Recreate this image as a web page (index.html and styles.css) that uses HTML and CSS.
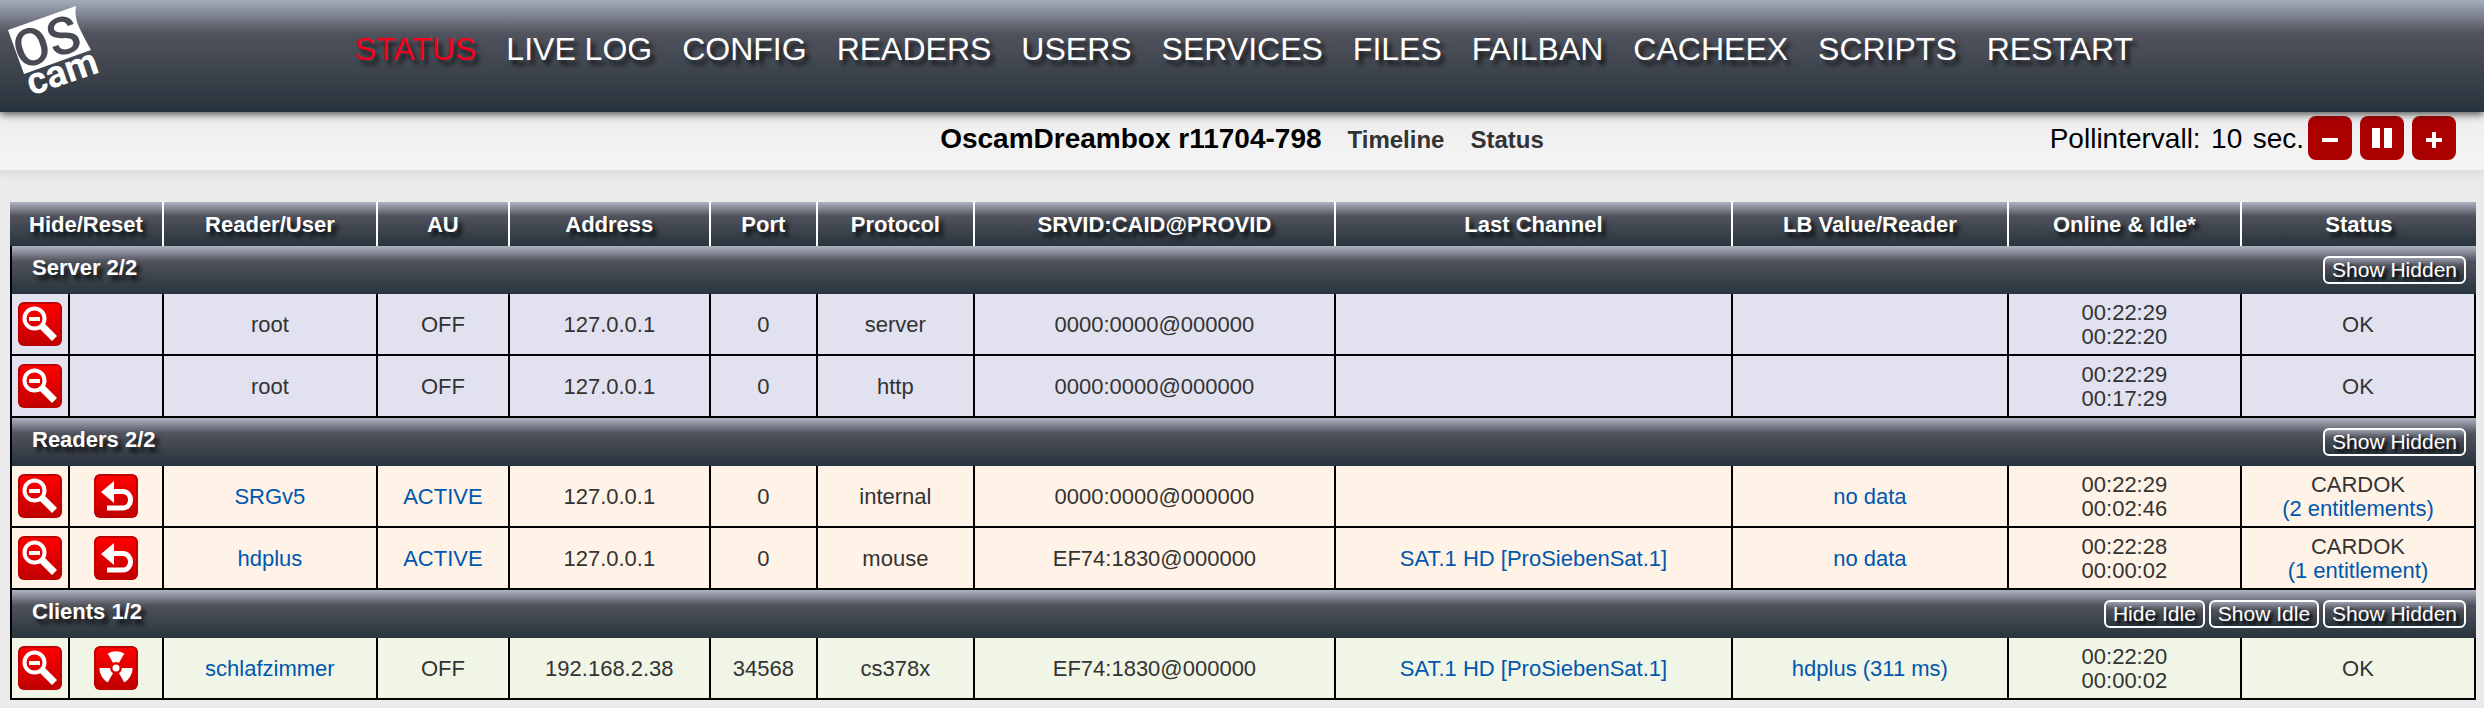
FILE: index.html
```html
<!DOCTYPE html>
<html lang="en">
<head>
  <meta charset="UTF-8" />
  <title>OSCam - Status</title>
  <link rel="stylesheet" href="styles.css">
</head>

<body>
  <!-- shared icons -->
  <svg class="defs" width="0" height="0" aria-hidden="true">
    <defs>
      <linearGradient id="red" x1="0" y1="0" x2="0" y2="1">
        <stop offset="0" stop-color="#ff0000" />
        <stop offset="1" stop-color="#c00000" />
      </linearGradient>
      <symbol id="tile" viewBox="0 0 44 44">
        <rect width="44" height="44" rx="6" fill="#bd0000" />
        <rect x="2" y="2" width="40" height="41" rx="4" fill="url(#red)" />
      </symbol>
      <symbol id="hide" viewBox="0 0 44 44">
        <use href="#tile" />
        <circle cx="16.500" cy="16.500" r="10" fill="none" stroke="#fff" stroke-width="4" />
        <path d="M11 15h11v4H11z" fill="#fff" />
        <path d="M24 24L36.500 36.500" stroke="#fff" stroke-width="7" />
      </symbol>
      <symbol id="reset" viewBox="0 0 44 44">
        <use href="#tile" />
        <path d="M7 18L20 7v22z" fill="#fff" />
        <path d="M19 17.500H29a7.500 8.200 0 0 1 0 16.500H13" fill="none" stroke="#fff" stroke-width="5" />
      </symbol>
      <symbol id="kill" viewBox="0 0 44 44">
        <use href="#tile" />
        <circle cx="22" cy="22" r="3.500" fill="#fff" />
        <path id="blade" d="M19 16.800L13.700 7.600Q22 3 30.300 7.600L25 16.800Q22 15.200 19 16.800z" fill="#fff" />
        <use href="#blade" transform="rotate(120 22 22)" />
        <use href="#blade" transform="rotate(240 22 22)" />
      </symbol>
    </defs>
  </svg>

  <header class="top">
    <a class="logo" href="#" aria-label="OSCam">
      <svg viewBox="0 0 120 112" width="120" height="112">
        <path d="M8 30L76 6Q74 16 79 27Q84 38 91 50L24 74z" fill="#fff" />
        <g class="logo-text" transform="rotate(-19 24 74)">
          <text class="os" x="22" y="69">OS</text>
          <text class="cam" x="24" y="97">cam</text>
        </g>
      </svg>
    </a>
    <nav>
      <ul class="menu">
        <li><a class="active" href="#">STATUS</a></li>
        <li><a href="#">LIVE LOG</a></li>
        <li><a href="#">CONFIG</a></li>
        <li><a href="#">READERS</a></li>
        <li><a href="#">USERS</a></li>
        <li><a href="#">SERVICES</a></li>
        <li><a href="#">FILES</a></li>
        <li><a href="#">FAILBAN</a></li>
        <li><a href="#">CACHEEX</a></li>
        <li><a href="#">SCRIPTS</a></li>
        <li><a href="#">RESTART</a></li>
      </ul>
    </nav>
  </header>

  <div class="subbar">
    <div class="submenu">
      <h1>OscamDreambox r11704-798</h1>
      <a href="#">Timeline</a>
      <a href="#">Status</a>
    </div>
    <div class="poll">
      <label for="interval">Pollintervall:</label>
      <input type="text" id="interval" value="10" />
      <span class="unit">sec.</span>
      <button type="button" aria-label="Slower">
        <svg viewBox="0 0 44 44" width="44" height="44"><path d="M14 22h16v4H14z" fill="#fff" /></svg>
      </button>
      <button type="button" aria-label="Pause">
        <svg viewBox="0 0 44 44" width="44" height="44"><path d="M12 12h8v20h-8zM24 12h8v20h-8z" fill="#fff" /></svg>
      </button>
      <button type="button" aria-label="Faster">
        <svg viewBox="0 0 44 44" width="44" height="44"><path d="M14 22h16v4H14zM20 16h4v16h-4z" fill="#fff" /></svg>
      </button>
    </div>
  </div>

  <main>
    <table class="status">
      <colgroup>
        <col class="c-hide"><col class="c-reset"><col class="c-user"><col class="c-au">
        <col class="c-addr"><col class="c-port"><col class="c-proto"><col class="c-srvid">
        <col class="c-chan"><col class="c-lb"><col class="c-online"><col class="c-stat">
      </colgroup>
      <thead>
        <tr>
          <th colspan="2">Hide/Reset</th>
          <th>Reader/User</th>
          <th>AU</th>
          <th>Address</th>
          <th>Port</th>
          <th>Protocol</th>
          <th>SRVID:CAID@PROVID</th>
          <th>Last Channel</th>
          <th>LB Value/Reader</th>
          <th>Online &amp; Idle*</th>
          <th>Status</th>
        </tr>
      </thead>

      <tbody class="server">
        <tr class="group">
          <th colspan="12">
            <div class="bar"><span>Server 2/2</span><div class="tools"><button type="button">Show Hidden</button></div></div>
          </th>
        </tr>
        <tr>
          <td class="act"><a class="icon" href="#" aria-label="Hide"><svg><use href="#hide" /></svg></a></td>
          <td class="act"></td>
          <td>root</td>
          <td>OFF</td>
          <td>127.0.0.1</td>
          <td>0</td>
          <td>server</td>
          <td>0000:0000@000000</td>
          <td></td>
          <td></td>
          <td>00:22:29<br>00:22:20</td>
          <td>OK</td>
        </tr>
        <tr>
          <td class="act"><a class="icon" href="#" aria-label="Hide"><svg><use href="#hide" /></svg></a></td>
          <td class="act"></td>
          <td>root</td>
          <td>OFF</td>
          <td>127.0.0.1</td>
          <td>0</td>
          <td>http</td>
          <td>0000:0000@000000</td>
          <td></td>
          <td></td>
          <td>00:22:29<br>00:17:29</td>
          <td>OK</td>
        </tr>
      </tbody>

      <tbody class="readers">
        <tr class="group">
          <th colspan="12">
            <div class="bar"><span>Readers 2/2</span><div class="tools"><button type="button">Show Hidden</button></div></div>
          </th>
        </tr>
        <tr>
          <td class="act"><a class="icon" href="#" aria-label="Hide"><svg><use href="#hide" /></svg></a></td>
          <td class="act"><a class="icon" href="#" aria-label="Restart"><svg><use href="#reset" /></svg></a></td>
          <td><a href="#">SRGv5</a></td>
          <td><a href="#">ACTIVE</a></td>
          <td>127.0.0.1</td>
          <td>0</td>
          <td>internal</td>
          <td>0000:0000@000000</td>
          <td></td>
          <td><a href="#">no data</a></td>
          <td>00:22:29<br>00:02:46</td>
          <td>CARDOK<br><a href="#">(2 entitlements)</a></td>
        </tr>
        <tr>
          <td class="act"><a class="icon" href="#" aria-label="Hide"><svg><use href="#hide" /></svg></a></td>
          <td class="act"><a class="icon" href="#" aria-label="Restart"><svg><use href="#reset" /></svg></a></td>
          <td><a href="#">hdplus</a></td>
          <td><a href="#">ACTIVE</a></td>
          <td>127.0.0.1</td>
          <td>0</td>
          <td>mouse</td>
          <td>EF74:1830@000000</td>
          <td><a href="#">SAT.1 HD [ProSiebenSat.1]</a></td>
          <td><a href="#">no data</a></td>
          <td>00:22:28<br>00:00:02</td>
          <td>CARDOK<br><a href="#">(1 entitlement)</a></td>
        </tr>
      </tbody>

      <tbody class="clients">
        <tr class="group">
          <th colspan="12">
            <div class="bar"><span>Clients 1/2</span><div class="tools"><button type="button">Hide Idle</button><button type="button">Show Idle</button><button type="button">Show Hidden</button></div></div>
          </th>
        </tr>
        <tr>
          <td class="act"><a class="icon" href="#" aria-label="Hide"><svg><use href="#hide" /></svg></a></td>
          <td class="act"><a class="icon" href="#" aria-label="Kill"><svg><use href="#kill" /></svg></a></td>
          <td><a href="#">schlafzimmer</a></td>
          <td>OFF</td>
          <td>192.168.2.38</td>
          <td>34568</td>
          <td>cs378x</td>
          <td>EF74:1830@000000</td>
          <td><a href="#">SAT.1 HD [ProSiebenSat.1]</a></td>
          <td><a href="#">hdplus (311 ms)</a></td>
          <td>00:22:20<br>00:00:02</td>
          <td>OK</td>
        </tr>
      </tbody>
    </table>
  </main>
</body>
</html>
```

FILE: styles.css
```css
* { box-sizing: border-box; margin: 0; padding: 0; }

body {
  font-family: "Liberation Sans", Arial, sans-serif;
  font-size: 22px;
  color: #333;
  background: #ebebeb;
}

a { color: #0057ae; text-decoration: none; }
.defs { position: absolute; }

/* --- Header --- */
.top {
  position: relative;
  display: flex;
  align-items: flex-start;
  height: 112px;
  background: linear-gradient(#a3acba, #50525c 30%, #28343d);
  box-shadow: 0 2px 8px rgba(0, 0, 0, 0.7);
}
.logo { flex: 1; }
.logo svg { display: block; }
.logo-text { font-family: Roboto, sans-serif; }
.logo-text .os { font-size: 52px; font-weight: 500; fill: #484b54; }
.logo-text .cam { font-size: 38px; font-weight: 700; fill: #fff; }
.top nav { flex: 6; }
.menu {
  display: flex;
  gap: 30px;
  list-style: none;
  font-size: 32px;
  line-height: 36px;
  padding-top: 31px;
  white-space: nowrap;
}
.menu a {
  color: #fff;
  text-shadow: 4px 5px 4px rgba(0, 0, 0, 0.7);
}
.menu .active { color: #f5001d; }

/* --- Sub bar --- */
.subbar {
  display: grid;
  grid-template-columns: 1fr auto 1fr;
  align-items: start;
  height: 60px;
  padding: 4px 28px 0;
  background: linear-gradient(#ededed, #f5f5f5);
  border-bottom: 2px solid #e0e0e0;
  box-shadow: 0 2px 8px rgba(0, 0, 0, 0.08);
}
.submenu {
  grid-column: 2;
  display: flex;
  align-items: baseline;
  gap: 26px;
  padding-top: 7px;
}
.submenu h1 {
  font-size: 28px;
  line-height: 32px;
  color: #000;
}
.submenu a {
  font-size: 24px;
  font-weight: bold;
  color: #333;
}
.poll {
  display: flex;
  justify-content: flex-end;
  align-items: center;
  font-size: 28px;
  color: #000;
}
.poll label,
.poll input,
.poll .unit { padding-top: 2px; }
.poll input {
  width: 52px;
  border: none;
  background: none;
  color: inherit;
  font: inherit;
  text-align: center;
}
.poll button {
  width: 44px;
  height: 44px;
  margin-right: 8px;
  border: none;
  border-radius: 8px;
  background: #ab0000;
}
.poll button:last-child { margin-right: 0; }
.poll svg { display: block; }
.poll .unit { margin-right: 4px; }

/* --- Status table --- */
main { padding: 30px 8px 8px 10px; }

.status {
  width: 100%;
  table-layout: fixed;
  border-collapse: separate;
  border-spacing: 0;
  line-height: 24px;
  text-align: center;
}

.status thead th,
.bar {
  background: linear-gradient(#adb3c1, #50525c 32%, #28343d);
  color: #fff;
  text-shadow: 4px 5px 4px rgba(0, 0, 0, 0.8);
}
.status thead th {
  height: 44px;
  padding-top: 2px;
  border-right: 2px solid #fff;
}
.status thead th:last-child { border-right: none; }

.group th { border-left: 2px solid #000; }
.bar {
  display: flex;
  justify-content: space-between;
  align-items: flex-start;
  height: 48px;
  padding: 10px 10px 0 20px;
}
.tools { display: flex; gap: 4px; }
.tools button {
  height: 28px;
  padding: 0 7px;
  border: 2px solid #fff;
  border-radius: 6px;
  background: linear-gradient(#9a9fac, #50525c 32%, #28343d);
  color: #fff;
  font: 21px "Liberation Sans", Arial, sans-serif;
  text-shadow: 3px 3px 3px #000;
}

.status td {
  height: 62px;
  padding-top: 2px;
  border-right: 2px solid #000;
  border-bottom: 2px solid #000;
}
.status .act { padding: 0; }
.status td:first-child { border-left: 2px solid #000; }
.server td { background: #e1e1ef; }
.readers td { background: #fff2e6; }
.clients td { background: #f0f5e6; }

.icon, .icon svg {
  display: block;
  width: 44px;
  height: 44px;
  margin: 0 auto;
}

/* column widths */
.c-hide { width: 2.43%; }
.c-reset { width: 3.81%; }
.c-user { width: 8.68%; }
.c-au { width: 5.35%; }
.c-addr { width: 8.15%; }
.c-port { width: 4.34%; }
.c-proto { width: 6.37%; }
.c-srvid { width: 14.64%; }
.c-chan { width: 16.1%; }
.c-lb { width: 11.19%; }
.c-online { width: 9.45%; }
.c-stat { width: 9.49%; }
```
